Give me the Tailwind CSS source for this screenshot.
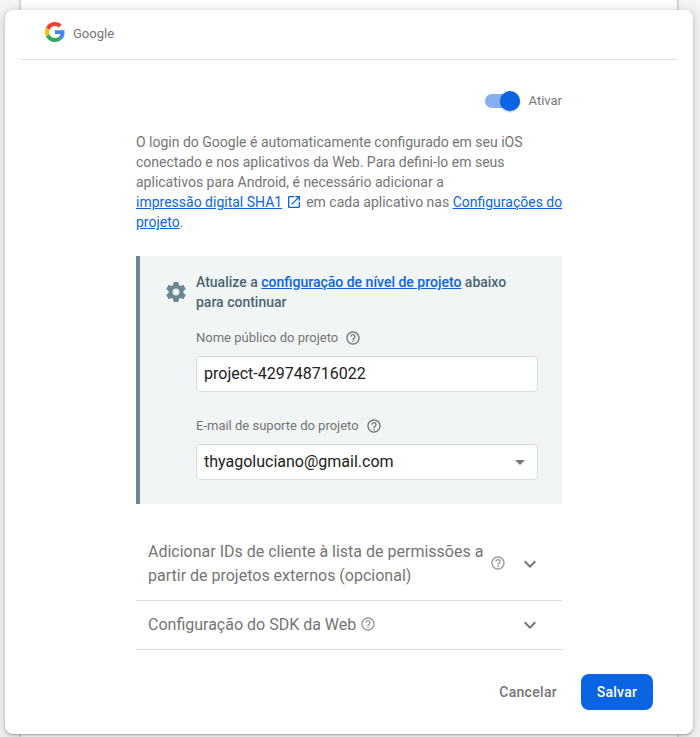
<!DOCTYPE html>
<html lang="pt-BR">
<head>
<meta charset="utf-8">
<title>Google</title>
<script src="https://cdn.jsdelivr.net/npm/@tailwindcss/browser@4"></script>
</head>
<body class="relative h-[737px] w-[700px] overflow-hidden bg-[#f5f6f8] font-['Roboto',sans-serif] text-[#757575]">
<svg class="hidden">
  <symbol id="help" viewBox="0 0 24 24"><path fill="currentColor" d="M11 18h2v-2h-2v2zm1-16C6.48 2 2 6.48 2 12s4.480 10 10 10 10-4.480 10-10S17.520 2 12 2zm0 18c-4.410 0-8-3.590-8-8s3.590-8 8-8 8 3.590 8 8-3.590 8-8 8zm0-14c-2.210 0-4 1.790-4 4h2c0-1.100.9-2 2-2s2 .9 2 2c0 2-3 1.750-3 5h2c0-2.250 3-2.500 3-5 0-2.210-1.790-4-4-4z"/></symbol>
  <symbol id="chevron" viewBox="0 0 24 24"><path fill="currentColor" d="M16.590 8.590L12 13.170 7.410 8.590 6 10l6 6 6-6z"/></symbol>
</svg>
<div class="absolute -top-3 left-[21px] h-[760px] w-[656px] bg-white shadow-[0_0_3px_rgba(0,0,0,0.4)]"></div>
<main class="relative mt-[10px] ml-[5px] flex h-[724px] w-[688px] flex-col rounded-[8px] bg-white shadow-[0_1px_2px_rgba(60,64,67,0.4),0_2px_12px_2px_rgba(60,64,67,0.2)]">
  <header class="mx-4 flex h-[50px] shrink-0 items-center border-b border-[#dcdcdc] pb-1 pl-6">
    <svg class="mb-[2px] size-5" viewBox="0 0 48 48">
      <path fill="#EA4335" d="M24 9.500c3.540 0 6.710 1.220 9.210 3.600l6.850-6.850C35.900 2.380 30.470 0 24 0 14.620 0 6.510 5.380 2.560 13.220l7.980 6.190C12.430 13.720 17.740 9.500 24 9.500z"/>
      <path fill="#4285F4" d="M46.980 24.550c0-1.570-.15-3.090-.38-4.550H24v9.020h12.940c-.58 2.960-2.260 5.480-4.780 7.180l7.730 6c4.510-4.180 7.090-10.360 7.090-17.650z"/>
      <path fill="#FBBC05" d="M10.530 28.590c-.48-1.450-.76-2.990-.76-4.590s.27-3.140.76-4.590l-7.980-6.190C.92 16.460 0 20.120 0 24c0 3.880.92 7.540 2.560 10.780l7.970-6.190z"/>
      <path fill="#34A853" d="M24 48c6.480 0 11.930-2.130 15.890-5.810l-7.730-6c-2.150 1.450-4.920 2.300-8.160 2.300-6.260 0-11.570-4.220-13.470-9.910l-7.980 6.190C6.510 42.620 14.620 48 24 48z"/>
    </svg>
    <span class="mt-[3px] ml-2 text-[13px] leading-5">Google</span>
  </header>

  <div class="ml-[131px] flex w-[426px] flex-col">
    <div class="mt-[31px] flex h-5 items-center justify-end">
      <span class="flex h-[14px] w-[35px] items-center justify-end rounded-full bg-[#84b0f1]">
        <span class="size-5 rounded-full bg-[#0b65e3] shadow-[0_1px_2px_rgba(0,0,0,0.3)]"></span>
      </span>
      <span class="ml-[9px] text-[13px] leading-5">Ativar</span>
    </div>
    <p class="mt-[21px] text-[14px] leading-5 whitespace-nowrap">O login do Google é automaticamente configurado em seu iOS<br>conectado e nos aplicativos da Web. Para defini-lo em seus<br>aplicativos para Android, é necessário adicionar a<br><a class="text-[#0b65e3] underline">impressão digital SHA1</a><svg class="mx-1 inline-block size-4 align-[-3px] text-[#0b65e3]" viewBox="0 0 24 24"><path fill="currentColor" d="M19 19H5V5h7V3H5c-1.110 0-2 .9-2 2v14c0 1.100.89 2 2 2h14c1.100 0 2-.9 2-2v-7h-2v7zM14 3v2h3.590l-9.830 9.830 1.410 1.410L19 6.410V10h2V3h-7z"/></svg>em cada aplicativo nas <a class="text-[#0b65e3] underline">Configurações do</a><br><a class="text-[#0b65e3] underline">projeto</a>.</p>

    <section class="mt-6 flex h-[248px] border-l-4 border-[#698894] bg-[#f1f5f6] pt-4 pr-6 pl-6">
      <svg class="mt-2 size-6 shrink-0 text-[#698894]" viewBox="0 0 24 24"><path fill="currentColor" d="M19.430 12.980c.04-.32.07-.64.07-.98s-.03-.66-.07-.98l2.110-1.650c.19-.15.24-.42.12-.64l-2-3.460c-.12-.22-.39-.3-.61-.22l-2.490 1c-.52-.4-1.080-.73-1.690-.98l-.38-2.650C14.460 2.180 14.250 2 14 2h-4c-.25 0-.46.18-.49.42l-.38 2.650c-.61.25-1.170.59-1.690.98l-2.490-1c-.23-.09-.49 0-.61.22l-2 3.460c-.13.22-.07.49.12.64l2.110 1.650c-.04.32-.07.65-.07.98s.03.66.07.98l-2.110 1.650c-.19.15-.24.42-.12.64l2 3.460c.12.22.39.3.61.22l2.490-1c.52.4 1.080.73 1.690.98l.38 2.650c.03.24.24.42.49.42h4c.25 0 .46-.18.49-.42l.38-2.650c.61-.25 1.170-.59 1.690-.98l2.490 1c.23.09.49 0 .61-.22l2-3.460c.12-.22.07-.49-.12-.64l-2.110-1.650zM12 15.500c-1.930 0-3.500-1.570-3.500-3.500s1.570-3.500 3.500-3.500 3.500 1.570 3.500 3.500-1.570 3.500-3.500 3.500z"/></svg>
      <div class="ml-2 flex-1">
        <p class="text-[14px] leading-5 font-medium whitespace-nowrap text-[#4a6572]">Atualize a <a class="text-[#0b65e3] underline">configuração de nível de projeto</a> abaixo<br>para continuar</p>
        <label class="mt-4 flex h-5 items-center text-[13px]">Nome público do projeto<svg class="ml-[7px] size-4"><use href="#help"/></svg></label>
        <div class="mt-2 flex h-9 items-center rounded-[4px] border border-[#dcdcdc] bg-white px-[7px] text-[16px] text-[#212121]">project-429748716022</div>
        <label class="mt-6 flex h-5 items-center text-[13px]">E-mail de suporte do projeto<svg class="ml-[7px] size-4"><use href="#help"/></svg></label>
        <div class="mt-2 flex h-9 items-center justify-between rounded-[4px] border border-[#dcdcdc] bg-white pr-3 pl-[7px] text-[16px] text-[#212121]">thyagoluciano@gmail.com<svg class="h-[5px] w-[10px] text-[#757575]" viewBox="0 0 10 5"><path fill="currentColor" d="M0 0h10L5 5z"/></svg></div>
      </div>
    </section>

    <div class="mt-6 flex h-[73px] items-center border-b border-[#dadada] pr-5 pl-3">
      <span class="text-[16px] leading-6 whitespace-nowrap">Adicionar IDs de cliente à lista de permissões a<br>partir de projetos externos (opcional)</span>
      <svg class="mb-[2px] ml-[7px] size-4 shrink-0 text-[#979797]"><use href="#help"/></svg>
      <svg class="ml-auto size-6 shrink-0"><use href="#chevron"/></svg>
    </div>
    <div class="flex h-[49px] items-center border-b border-[#dadada] pr-5 pl-3">
      <span class="text-[16px] leading-6 whitespace-nowrap">Configuração do SDK da Web</span>
      <svg class="mb-[2px] ml-1 size-4 shrink-0 text-[#979797]"><use href="#help"/></svg>
      <svg class="ml-auto size-6 shrink-0"><use href="#chevron"/></svg>
    </div>
  </div>

  <footer class="mt-6 flex items-center justify-end pr-10 text-[14px] font-medium tracking-[0.3px]">
    <button class="h-9 px-6">Cancelar</button>
    <button class="h-9 w-[72px] rounded-[8px] bg-[#0b65e3] text-white">Salvar</button>
  </footer>
</main>
</body>
</html>
